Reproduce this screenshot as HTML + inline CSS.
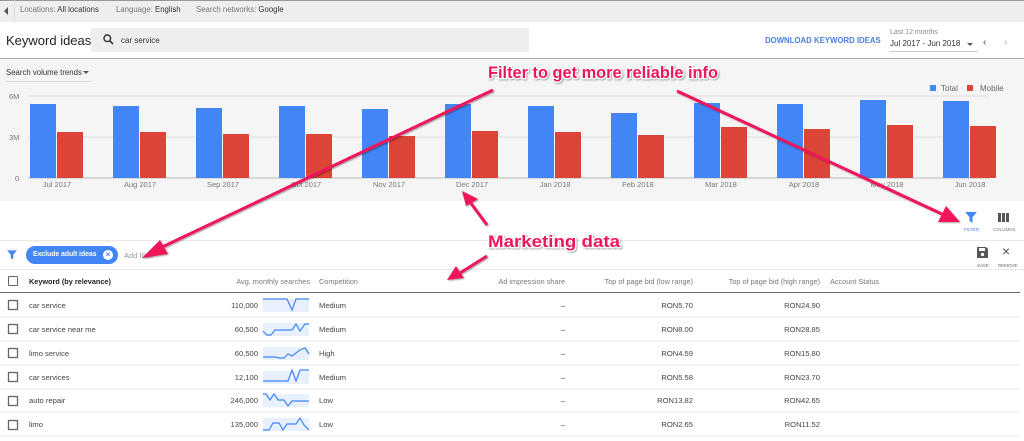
<!DOCTYPE html>
<html><head><meta charset="utf-8"><style>
*{margin:0;padding:0;box-sizing:border-box}
body{width:1024px;height:441px;overflow:hidden;background:#fff;font-family:"Liberation Sans",Arial,sans-serif;color:#333;position:relative}
.a{position:absolute;white-space:nowrap}
.g{color:#777}
.hdr{font-size:7.3px;color:#555}
</style></head><body>
<div class="a" style="left:0;top:0;width:1024px;height:22px;background:#eeeeee;border-top:1px solid #999"></div>
<div class="a" style="left:0;top:0;width:15px;height:22px;border-right:1px solid #ddd"></div>
<div class="a" style="left:4px;top:7px;width:0;height:0;border-top:4px solid transparent;border-bottom:4px solid transparent;border-right:4px solid #555"></div>
<div class="a" style="left:20px;top:5px;font-size:7.8px"><span class="g">Locations:</span> All locations</div>
<div class="a" style="left:116px;top:5px;font-size:7.8px"><span class="g">Language:</span> English</div>
<div class="a" style="left:196px;top:5px;font-size:7.8px"><span class="g">Search networks:</span> Google</div>
<div class="a" style="left:6px;top:33px;font-size:13px;color:#222">Keyword ideas</div>
<div class="a" style="left:91px;top:28px;width:438px;height:24px;background:#eeeeee"></div>
<svg class="a" style="left:103px;top:34px" width="11" height="11" viewBox="0 0 11 11"><circle cx="4.3" cy="4.3" r="3.3" fill="none" stroke="#333" stroke-width="1.4"/><path d="M6.8 6.8L10 10" stroke="#333" stroke-width="1.6"/></svg>
<div class="a" style="left:121px;top:36px;font-size:8px">car service</div>
<div class="a" style="left:765px;top:36px;font-size:7.8px;color:#4a7fe0;font-weight:bold">DOWNLOAD KEYWORD IDEAS</div>
<div class="a" style="left:890px;top:29px;font-size:7px;color:#888">Last 12 months</div>
<div class="a" style="left:890px;top:39px;font-size:8px">Jul 2017 - Jun 2018</div>
<div class="a" style="left:890px;top:51px;width:88px;height:1px;background:#ccc"></div>
<div class="a" style="left:967px;top:43px;border-left:3px solid transparent;border-right:3px solid transparent;border-top:3px solid #555"></div>
<div class="a" style="left:983px;top:37px;font-size:10px;color:#444">&#8249;</div>
<div class="a" style="left:1004px;top:37px;font-size:10px;color:#aaa">&#8250;</div>
<div class="a" style="left:0;top:58px;width:1024px;height:143px;background:#f5f5f5;border-top:1px solid #aaa"></div>
<div class="a" style="left:6px;top:68px;font-size:7.8px">Search volume trends</div>
<div class="a" style="left:83px;top:71px;border-left:3px solid transparent;border-right:3px solid transparent;border-top:3px solid #555"></div>
<div class="a" style="left:6px;top:81px;width:86px;height:1px;background:#ddd"></div>
<div class="a" style="left:930px;top:85px;width:6px;height:6px;background:#4285f4"></div>
<div class="a" style="left:941px;top:84px;font-size:8px;color:#666">Total</div>
<div class="a" style="left:967px;top:85px;width:6px;height:6px;background:#db4437"></div>
<div class="a" style="left:980px;top:84px;font-size:8px;color:#666">Mobile</div>
<svg class="a" style="left:0;top:88px" width="1024" height="105" viewBox="0 88 1024 105" font-family="Liberation Sans,Arial,sans-serif" font-size="7.5" fill="#777">
<line x1="28" y1="96" x2="990" y2="96" stroke="#e0e0e0"/>
<line x1="28" y1="137" x2="990" y2="137" stroke="#e0e0e0"/>
<line x1="28" y1="178" x2="990" y2="178" stroke="#bbb"/>
<text x="9" y="99">6M</text><text x="9" y="140">3M</text><text x="15" y="181">0</text>
<rect x="30" y="104" width="26" height="74" fill="#4285f4"/><rect x="57" y="132" width="26" height="46" fill="#db4437"/><text x="57" y="187" text-anchor="middle">Jul 2017</text>
<rect x="113" y="106" width="26" height="72" fill="#4285f4"/><rect x="140" y="132" width="26" height="46" fill="#db4437"/><text x="140" y="187" text-anchor="middle">Aug 2017</text>
<rect x="196" y="108" width="26" height="70" fill="#4285f4"/><rect x="223" y="134" width="26" height="44" fill="#db4437"/><text x="223" y="187" text-anchor="middle">Sep 2017</text>
<rect x="279" y="106" width="26" height="72" fill="#4285f4"/><rect x="306" y="134" width="26" height="44" fill="#db4437"/><text x="306" y="187" text-anchor="middle">Oct 2017</text>
<rect x="362" y="109" width="26" height="69" fill="#4285f4"/><rect x="389" y="136" width="26" height="42" fill="#db4437"/><text x="389" y="187" text-anchor="middle">Nov 2017</text>
<rect x="445" y="104" width="26" height="74" fill="#4285f4"/><rect x="472" y="131" width="26" height="47" fill="#db4437"/><text x="472" y="187" text-anchor="middle">Dec 2017</text>
<rect x="528" y="106" width="26" height="72" fill="#4285f4"/><rect x="555" y="132" width="26" height="46" fill="#db4437"/><text x="555" y="187" text-anchor="middle">Jan 2018</text>
<rect x="611" y="113" width="26" height="65" fill="#4285f4"/><rect x="638" y="135" width="26" height="43" fill="#db4437"/><text x="638" y="187" text-anchor="middle">Feb 2018</text>
<rect x="694" y="103" width="26" height="75" fill="#4285f4"/><rect x="721" y="127" width="26" height="51" fill="#db4437"/><text x="721" y="187" text-anchor="middle">Mar 2018</text>
<rect x="777" y="104" width="26" height="74" fill="#4285f4"/><rect x="804" y="129" width="26" height="49" fill="#db4437"/><text x="804" y="187" text-anchor="middle">Apr 2018</text>
<rect x="860" y="100" width="26" height="78" fill="#4285f4"/><rect x="887" y="125" width="26" height="53" fill="#db4437"/><text x="887" y="187" text-anchor="middle">May 2018</text>
<rect x="943" y="101" width="26" height="77" fill="#4285f4"/><rect x="970" y="126" width="26" height="52" fill="#db4437"/><text x="970" y="187" text-anchor="middle">Jun 2018</text>
</svg>
<!-- toolbar -->
<svg class="a" style="left:965px;top:212px" width="12" height="11" viewBox="0 0 12 11"><path d="M0 0H12L7.5 5V11L4.5 9V5Z" fill="#4285f4"/></svg>
<div class="a" style="left:964px;top:227px;font-size:4.5px;color:#4285f4">FILTER</div>
<svg class="a" style="left:998px;top:213px" width="11" height="9"><rect x="0" y="0" width="3" height="9" fill="#555"/><rect x="4" y="0" width="3" height="9" fill="#555"/><rect x="8" y="0" width="3" height="9" fill="#555"/></svg>
<div class="a" style="left:993px;top:227px;font-size:4.5px;color:#777">COLUMNS</div>
<div class="a" style="left:0;top:240px;width:1024px;height:1px;background:#e8e8e8"></div>
<svg class="a" style="left:7px;top:250px" width="10" height="10" viewBox="0 0 12 11"><path d="M0 0H12L7.5 5V11L4.5 9V5Z" fill="#4285f4"/></svg>
<div class="a" style="left:26px;top:246px;width:92px;height:18px;border-radius:9px;background:#4285f4"></div>
<div class="a" style="left:33px;top:251px;font-size:7px;color:#fff;font-weight:bold;letter-spacing:-0.1px">Exclude adult ideas</div>
<div class="a" style="left:103px;top:250px;width:10px;height:10px;border-radius:5px;background:#fff;color:#4285f4;font-size:8px;line-height:10px;text-align:center;font-weight:bold">×</div>
<div class="a" style="left:124px;top:251px;font-size:7.5px;color:#999">Add filter</div>
<svg class="a" style="left:977px;top:247px" width="11" height="11"><path d="M0 0H9L11 2V11H0Z" fill="#555"/><rect x="2" y="1" width="6" height="3" fill="#fff"/><circle cx="5.5" cy="7.5" r="1.6" fill="#fff"/></svg>
<div class="a" style="left:977px;top:263px;font-size:4.5px;color:#666">SAVE</div>
<div class="a" style="left:1002px;top:243px;font-size:14px;color:#555">×</div>
<div class="a" style="left:998px;top:263px;font-size:4.5px;color:#666">REMOVE</div>
<div class="a" style="left:0;top:269px;width:1024px;height:1px;background:#e8e8e8"></div>
<!-- table header -->
<div class="a" style="left:8px;top:276px;width:10px;height:10px;border:1.5px solid #666;border-radius:1px"></div>
<div class="a hdr" style="left:29px;top:277px;color:#222;font-weight:bold">Keyword (by relevance)</div>
<div class="a hdr" style="left:220px;top:277px;width:90px;text-align:right;color:#777">Avg. monthly searches</div>
<div class="a hdr" style="left:319px;top:277px;color:#777">Competition</div>
<div class="a hdr" style="left:465px;top:277px;width:100px;text-align:right;color:#777">Ad impression share</div>
<div class="a hdr" style="left:570px;top:277px;width:123px;text-align:right;color:#777">Top of page bid (low range)</div>
<div class="a hdr" style="left:690px;top:277px;width:130px;text-align:right;color:#777">Top of page bid (high range)</div>
<div class="a hdr" style="left:830px;top:277px;color:#777">Account Status</div>
<div class="a" style="left:0;top:292px;width:1020px;height:1px;background:#666"></div>
<svg class="a" style="left:0;top:293px" width="1024" height="148" font-family="Liberation Sans,Arial,sans-serif" font-size="7.6" fill="#444">
<g stroke="#e8e8e8"><line x1="0" y1="24" x2="1020" y2="24"/><line x1="0" y1="48" x2="1020" y2="48"/><line x1="0" y1="72" x2="1020" y2="72"/><line x1="0" y1="96" x2="1020" y2="96"/><line x1="0" y1="119" x2="1020" y2="119"/><line x1="0" y1="143" x2="1020" y2="143"/></g>
<g fill="none" stroke="#666" stroke-width="1.3"><rect x="8.5" y="7.5" width="9" height="9"/><rect x="8.5" y="31.5" width="9" height="9"/><rect x="8.5" y="55.5" width="9" height="9"/><rect x="8.5" y="79.5" width="9" height="9"/><rect x="8.5" y="103.5" width="9" height="9"/><rect x="8.5" y="127.5" width="9" height="9"/></g>
<text x="29" y="15">car service</text><text x="29" y="39">car service near me</text><text x="29" y="63">limo service</text><text x="29" y="87">car services</text><text x="29" y="110">auto repair</text><text x="29" y="134">limo</text>
<g text-anchor="end"><text x="258" y="15">110,000</text><text x="258" y="39">60,500</text><text x="258" y="63">60,500</text><text x="258" y="87">12,100</text><text x="258" y="110">246,000</text><text x="258" y="134">135,000</text>
<text x="565" y="15">–</text><text x="565" y="39">–</text><text x="565" y="63">–</text><text x="565" y="87">–</text><text x="565" y="110">–</text><text x="565" y="134">–</text>
<text x="693" y="15">RON5.70</text><text x="693" y="39">RON8.00</text><text x="693" y="63">RON4.59</text><text x="693" y="87">RON5.58</text><text x="693" y="110">RON13.82</text><text x="693" y="134">RON2.65</text>
<text x="820" y="15">RON24.90</text><text x="820" y="39">RON28.85</text><text x="820" y="63">RON15.80</text><text x="820" y="87">RON23.70</text><text x="820" y="110">RON42.65</text><text x="820" y="134">RON11.52</text></g>
<text x="319" y="15">Medium</text><text x="319" y="39">Medium</text><text x="319" y="63">High</text><text x="319" y="87">Medium</text><text x="319" y="110">Low</text><text x="319" y="134">Low</text>
<g fill="#e8f0fd"><rect x="263" y="6" width="46" height="13"/><rect x="263" y="30" width="46" height="13"/><rect x="263" y="54" width="46" height="13"/><rect x="263" y="78" width="46" height="13"/><rect x="263" y="101" width="46" height="13"/><rect x="263" y="125" width="46" height="13"/></g>
<g fill="none" stroke="#4285f4" stroke-width="1.2">
<polyline points="263,6 287,6 292,17 296,6 309,6"/>
<polyline points="263,38 267,42 271,42 275,37 292,37 296,31 300,38 305,31 309,31"/>
<polyline points="263,64 275,64 280,65 284,65 288,61 292,63 300,57 305,55 309,61"/>
<polyline points="263,88 288,88 292,77 296,88 300,77 309,77"/>
<polyline points="263,101 266,101 270,107 274,101 278,107 284,107 288,113 292,108 309,108"/>
<polyline points="263,137 269,137 273,130 279,130 283,137 287,131 296,131 300,125 304,132 309,137"/>
</g>
</svg>
<!-- annotations -->
<svg class="a" style="left:0;top:0" width="1024" height="441">
<defs><filter id="sh" x="-10%" y="-10%" width="120%" height="130%"><feDropShadow dx="1" dy="1" stdDeviation="0.8" flood-color="#000" flood-opacity="0.35"/></filter></defs>
<g fill="#f0145a" stroke="#f0145a" filter="url(#sh)">
<line x1="493" y1="90" x2="160" y2="248" stroke-width="3"/><polygon points="142,258 160,240 168,254" stroke="none"/>
<line x1="677" y1="91" x2="942" y2="214" stroke-width="3"/><polygon points="960,222 938,222 946,206" stroke="none"/>
<line x1="487" y1="225" x2="470" y2="202" stroke-width="3"/><polygon points="462,191 478,199 466,206" stroke="none"/>
<line x1="487" y1="256" x2="460" y2="273" stroke-width="3"/><polygon points="447,280 456,266 464,278" stroke="none"/>
</g>
<g font-family="Liberation Sans,Arial,sans-serif" font-weight="bold" font-size="17" fill="#f0145a" stroke="#fff" stroke-width="2.5" paint-order="stroke" filter="url(#sh)">
<text x="488" y="78" textLength="230" lengthAdjust="spacingAndGlyphs">Filter to get more reliable info</text>
<text x="488" y="247" textLength="132" lengthAdjust="spacingAndGlyphs">Marketing data</text>
</g>
</svg>
</body></html>
